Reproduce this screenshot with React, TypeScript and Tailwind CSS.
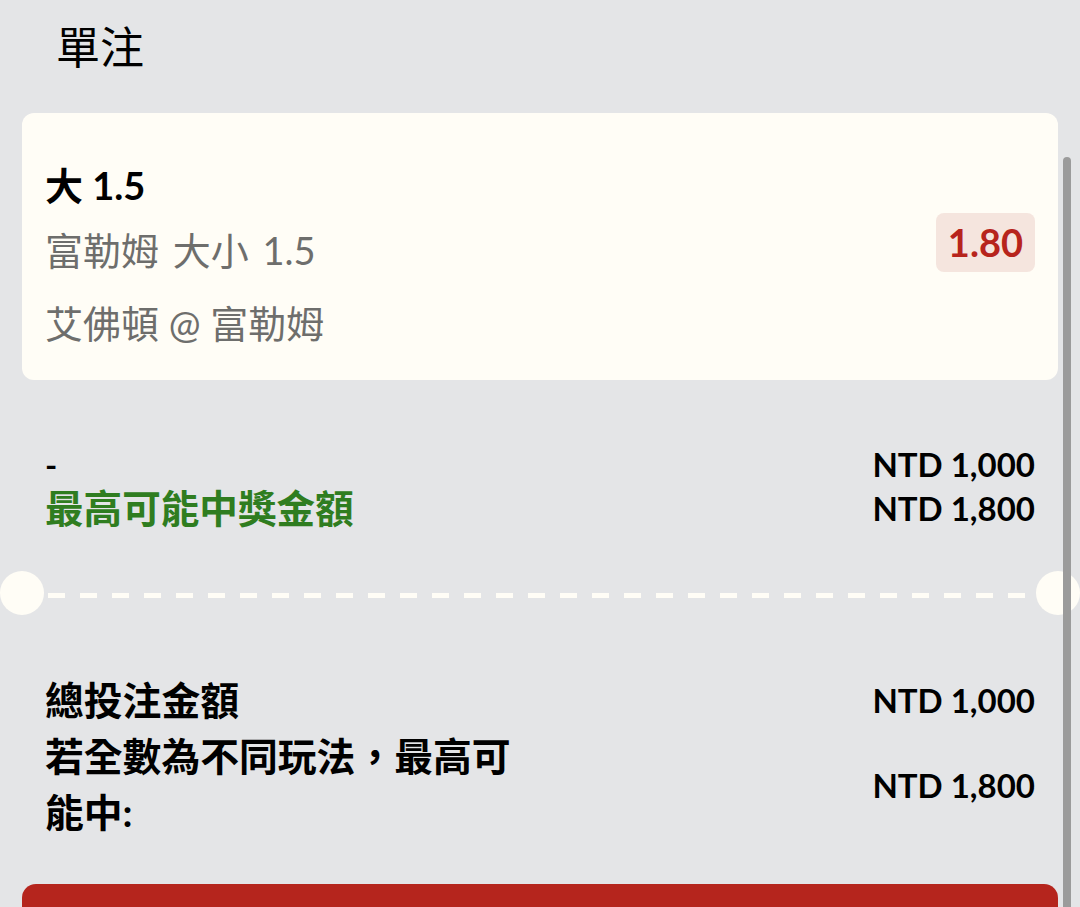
import React from "react";

const font = { fontFamily: "Lato, 'Noto Sans CJK TC', sans-serif" };

const App = () => {
  return (
    <div
      className="relative w-[1080px] h-[907px] overflow-hidden bg-[#e4e5e7] text-black"
      style={font}
    >
      {/* Header */}
      <div className="pl-[56px] pt-[20px] h-[113px] text-[44px] leading-[54px]">單注</div>

      <div className="px-[22px]">
        {/* Selection card */}
        <div className="flex items-center justify-between h-[267px] rounded-[12px] bg-[#fffdf6] pl-[23px] pr-[23px]">
          <div className="flex flex-col self-start pt-[49px]">
            <div className="text-[38px] font-bold leading-[46px]">大 1.5</div>
            <div className="mt-[19px] text-[38px] leading-[46px] text-[#6e6e6c] [word-spacing:4px]">富勒姆 大小 1.5</div>
            <div className="mt-[27px] text-[38px] leading-[46px] text-[#6e6e6c]">艾佛頓 @ 富勒姆</div>
          </div>
          <div className="rounded-[8px] bg-[#f5e5de] px-[12px] h-[59px] flex items-center text-[38px] font-bold text-[#b7241c] mb-[9px]">
            1.80
          </div>
        </div>

        {/* Stake / potential win */}
        <div className="flex justify-between pl-[23px] pr-[23px] pt-[62px] h-[194px]">
          <div className="flex flex-col">
            <div className="text-[33px] font-bold leading-[44px]">-</div>
            <div className="text-[38.6px] font-bold leading-[44px] text-[#2f7d20]">最高可能中獎金額</div>
          </div>
          <div className="flex flex-col items-end text-[33px] font-bold leading-[44px]">
            <div>NTD 1,000</div>
            <div>NTD 1,800</div>
          </div>
        </div>

        {/* Totals */}
        <div className="flex justify-between items-start pl-[23px] pr-[23px] pt-[98px]">
          <div className="flex flex-col w-[490px] text-[38.8px] font-bold leading-[56px]">
            <div>總投注金額</div>
            <div>若全數為不同玩法，最高可能中:</div>
          </div>
          <div className="flex flex-col items-end gap-[41px] pt-[6px] text-[33px] font-bold leading-[44px]">
            <div>NTD 1,000</div>
            <div>NTD 1,800</div>
          </div>
        </div>

        {/* Place bet button */}
        <div className="mt-[44px] h-[60px] rounded-t-[14px] bg-[#b5251d]"></div>
      </div>

      {/* Ticket perforation */}
      <div className="absolute left-[48px] right-[45px] top-[593px] h-[5px] bg-[repeating-linear-gradient(to_right,#fffdf6_0,#fffdf6_17px,transparent_17px,transparent_32px)]"></div>
      <div className="absolute left-0 top-[571px] w-[44px] h-[44px] rounded-full bg-[#fffdf6]"></div>
      <div className="absolute left-[1036px] top-[571px] w-[44px] h-[44px] rounded-full bg-[#fffdf6]"></div>

      {/* Scrollbar */}
      <div className="absolute left-[1063px] top-[157px] w-[8px] h-[760px] rounded-full bg-[#9b9b9b]"></div>
    </div>
  );
};

export default App;
